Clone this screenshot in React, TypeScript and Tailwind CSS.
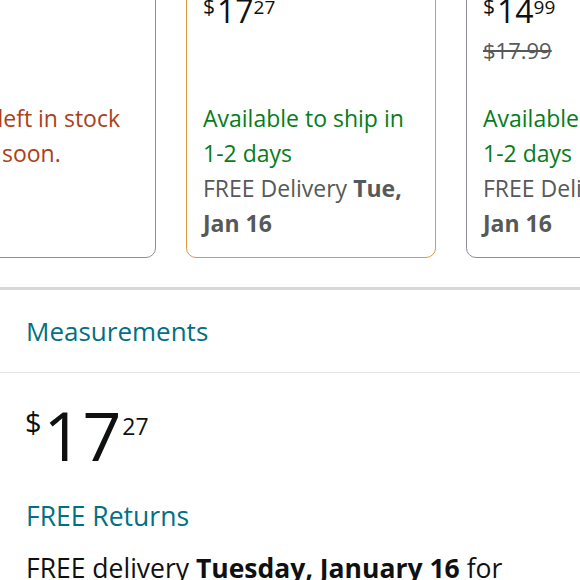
import type { ReactNode } from "react";

type Option = {
  id: string;
  selected?: boolean;
  whole?: string;
  fraction?: string;
  listPrice?: string;
  stock: ReactNode;
};

const options: Option[] = [
  {
    id: "a",
    stock: (
      <p className="text-[#ab401b]">
        Only 1 left in stock
        <br />- order soon.
      </p>
    ),
  },
  {
    id: "b",
    selected: true,
    whole: "17",
    fraction: "27",
    stock: <Shipping />,
  },
  {
    id: "c",
    whole: "14",
    fraction: "99",
    listPrice: "$17.99",
    stock: <Shipping />,
  },
];

function Shipping() {
  return (
    <>
      <p className="text-[#067d1a]">
        Available to ship in
        <br />
        1-2 days
      </p>
      <p className="text-[#565959]">
        FREE Delivery <span className="font-bold">Tue,</span>
        <br />
        <span className="font-bold">Jan 16</span>
      </p>
    </>
  );
}

function OptionCard({ option }: { option: Option }) {
  return (
    <div
      className={
        option.selected
          ? "w-[250px] shrink-0 rounded-[10px] border-[1.5px] border-[#dc9a3c] px-[16px] pt-[20px] pb-[16px]"
          : "w-[250px] shrink-0 rounded-[10px] border-[1.5px] border-[#8d9096] px-[16px] pt-[20px] pb-[16px]"
      }
    >
      <div className="h-[40px]">
        {option.whole && (
          <div className="flex items-start text-[#0f1111]">
            <span className="text-[21px] leading-[31px]">$</span>
            <span className="ml-[2px] text-[32px] leading-[40px]">{option.whole}</span>
            <span className="text-[19px] leading-[32px]">{option.fraction}</span>
          </div>
        )}
      </div>
      <div className="mt-[5px] h-[28px] text-[22px] leading-[28px] text-[#565959]">
        {option.listPrice && <s>{option.listPrice}</s>}
      </div>
      <div className="mt-[37px] text-[23px] leading-[35px] whitespace-nowrap">{option.stock}</div>
    </div>
  );
}

export default function App() {
  return (
    <div className="w-[580px] h-[580px] overflow-hidden bg-white font-['Open_Sans',sans-serif]">
      {/* Size options, scrolled sideways */}
      <div className="-mt-[30px] -ml-[94px] flex gap-[30px] pb-[29px]">
        {options.map((o) => (
          <OptionCard key={o.id} option={o} />
        ))}
      </div>

      <div className="h-[3px] bg-[#d5d9d9]" />

      <div className="flex h-[83px] items-center border-b border-[#e3e6e6] px-[26px] text-[26px] text-[#007185]">
        Measurements
      </div>

      <div className="px-[26px]">
        <div className="mt-[22px] flex items-start text-[#0f1111]">
          <span className="-ml-[1px] text-[29px] leading-[54px]">$</span>
          <span className="ml-[2px] text-[68px] leading-[80px]">17</span>
          <span className="ml-[1px] text-[23px] leading-[62px]">27</span>
        </div>
        <p className="mt-[24px] text-[26.5px] leading-[34px] text-[#007185]">FREE Returns</p>
        <p className="mt-[18px] whitespace-nowrap text-[26.5px] leading-[34px] text-[#0f1111]">
          FREE delivery <span className="font-bold">Tuesday, January 16</span> for
        </p>
      </div>
    </div>
  );
}
